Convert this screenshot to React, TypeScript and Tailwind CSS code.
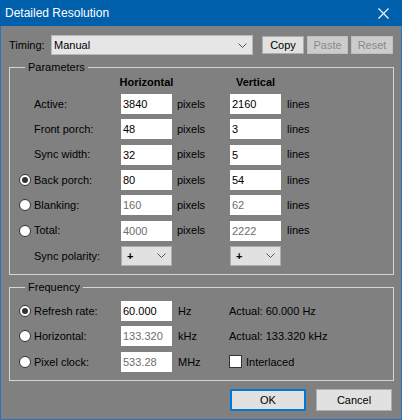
import type { ReactNode } from 'react';

const Radio = ({ checked }: { checked?: boolean }) => (
  <span className="w-[12px] h-[12px] rounded-full bg-white border border-[#333] flex items-center justify-center">
    {checked && <span className="w-[6px] h-[6px] rounded-full bg-[#333]" />}
  </span>
);

const Chevron = ({ className }: { className?: string }) => (
  <svg width="9" height="5" viewBox="0 0 9 5" className={className}>
    <path d="M0.5 0.5 L4.5 4.5 L8.5 0.5" fill="none" stroke="#555" strokeWidth="1" />
  </svg>
);

const Field = ({ value, disabled }: { value: string; disabled?: boolean }) => (
  <div
    className={
      disabled
        ? 'w-[51px] h-[20px] bg-white pl-[2px] leading-[20px] text-[#6d6d6d]'
        : 'w-[51px] h-[20px] bg-white pl-[2px] leading-[20px] text-black'
    }
  >
    {value}
  </div>
);

const PolaritySelect = () => (
  <div className="w-[51px] h-[20px] bg-[#e1e1e1] border border-[#adadad] flex items-center justify-between pl-[5px] pr-[5px]">
    <span className="font-bold">+</span>
    <Chevron />
  </div>
);

interface RowProps {
  radio?: boolean;
  checked?: boolean;
  label: string;
  children: ReactNode;
}

const Row = ({ radio, checked, label, children }: RowProps) => (
  <div className="flex items-center h-[20px]">
    <div className="w-[15px] flex items-center">{radio && <Radio checked={checked} />}</div>
    <div className="w-[87px]">{label}</div>
    {children}
  </div>
);

const params = [
  { label: 'Active:', h: '3840', v: '2160' },
  { label: 'Front porch:', h: '48', v: '3' },
  { label: 'Sync width:', h: '32', v: '5' },
  { label: 'Back porch:', h: '80', v: '54', radio: true, checked: true },
  { label: 'Blanking:', h: '160', v: '62', radio: true, disabled: true },
  { label: 'Total:', h: '4000', v: '2222', radio: true, disabled: true },
];

export default function App() {
  return (
    <div className="w-[402px] h-[420px] flex flex-col bg-[#808080] border-x border-b border-[#2b73bd] font-['Tahoma','Liberation_Sans',sans-serif] text-[11px] text-black select-none">
      {/* Title bar */}
      <div className="h-[26px] -mx-px bg-[#0060ac] flex items-center justify-between pl-[5px] pr-[13px] shrink-0">
        <span className="font-['Segoe_UI','Liberation_Sans',sans-serif] text-[12px] text-white">Detailed Resolution</span>
        <svg width="11" height="11" viewBox="0 0 11 11">
          <path d="M0.5 0.5 L10.5 10.5 M10.5 0.5 L0.5 10.5" stroke="#fff" strokeWidth="1.1" />
        </svg>
      </div>

      {/* Timing */}
      <div className="flex items-center pl-[8px] mt-[9px] h-[20px]">
        <span className="w-[42px]">Timing:</span>
        <div className="w-[202px] h-[20px] bg-[#e6e6e6] border border-[#b9b9b9] flex items-center justify-between pl-[2px] pr-[5px]">
          <span>Manual</span>
          <Chevron />
        </div>
        <div className="flex gap-[3px] ml-[9px]">
          <button className="w-[42px] h-[18px] bg-[#e1e1e1] border border-[#adadad] text-black">Copy</button>
          <button className="w-[41px] h-[18px] bg-[#cccccc] border border-[#bfbfbf] text-[#8a8a8a]">Paste</button>
          <button className="w-[42px] h-[18px] bg-[#cccccc] border border-[#bfbfbf] text-[#8a8a8a]">Reset</button>
        </div>
      </div>

      {/* Parameters */}
      <fieldset className="ml-[8px] mt-[6px] w-[385px] border border-[#d5d5d5] pl-[9px] pt-[1px] pb-[8px]">
        <legend className="ml-[6px] px-[3px] leading-[13px]">Parameters</legend>
        <div className="flex items-center h-[15px] font-bold">
          <div className="w-[102px]" />
          <div className="w-[51px] flex justify-center whitespace-nowrap">Horizontal</div>
          <div className="w-[58px]" />
          <div className="w-[51px] flex justify-center whitespace-nowrap">Vertical</div>
        </div>
        <div className="flex flex-col gap-[5.33px] mt-[4px]">
          {params.map((p) => (
            <Row key={p.label} radio={p.radio} checked={p.checked} label={p.label}>
              <Field value={p.h} disabled={p.disabled} />
              <span className="w-[58px] pl-[5px]">pixels</span>
              <Field value={p.v} disabled={p.disabled} />
              <span className="pl-[6px]">lines</span>
            </Row>
          ))}
          <Row label="Sync polarity:">
            <PolaritySelect />
            <span className="w-[58px]" />
            <PolaritySelect />
          </Row>
        </div>
      </fieldset>

      {/* Frequency */}
      <fieldset className="ml-[8px] mt-[6px] w-[385px] border border-[#d5d5d5] pl-[9px] pt-[7px] pb-[8px]">
        <legend className="ml-[6px] px-[3px] leading-[13px]">Frequency</legend>
        <div className="flex flex-col gap-[5.5px]">
          <Row radio checked label="Refresh rate:">
            <Field value="60.000" />
            <span className="w-[57px] pl-[6px]">Hz</span>
            <span>Actual: 60.000 Hz</span>
          </Row>
          <Row radio label="Horizontal:">
            <Field value="133.320" disabled />
            <span className="w-[57px] pl-[6px]">kHz</span>
            <span>Actual: 133.320 kHz</span>
          </Row>
          <Row radio label="Pixel clock:">
            <Field value="533.28" disabled />
            <span className="w-[57px] pl-[6px]">MHz</span>
            <span className="w-[13px] h-[13px] bg-white border border-[#333]" />
            <span className="ml-[4px]">Interlaced</span>
          </Row>
        </div>
      </fieldset>

      {/* Buttons */}
      <div className="flex justify-end gap-[10px] pr-[9px] mt-[8px]">
        <button className="w-[76px] h-[22px] bg-[#e1e1e1] border-2 border-[#0078d7] text-black">OK</button>
        <button className="w-[76px] h-[22px] bg-[#e1e1e1] border border-[#adadad] text-black">Cancel</button>
      </div>
    </div>
  );
}
